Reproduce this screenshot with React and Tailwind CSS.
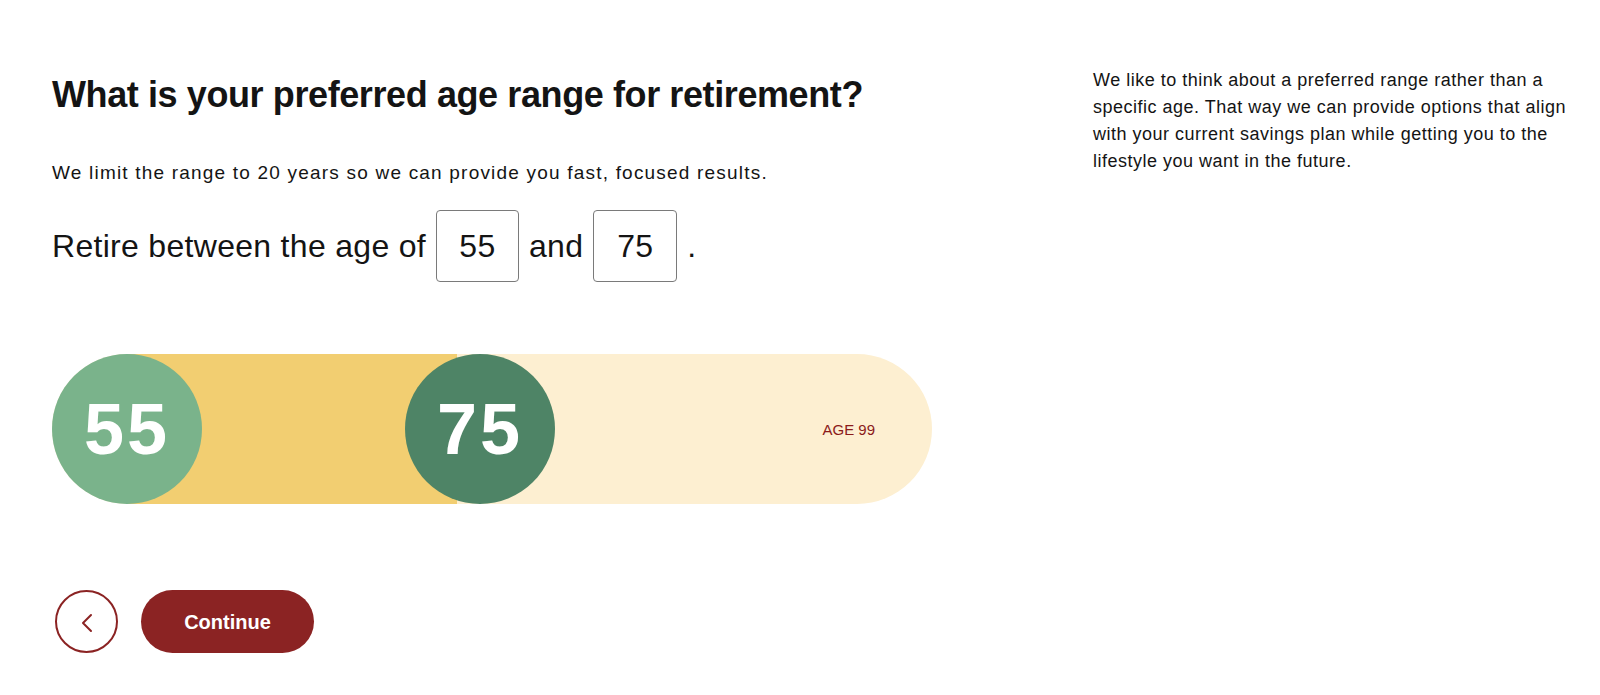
import React from "react";

export default function App() {
  const font = { fontFamily: '"Liberation Sans", Arial, Helvetica, sans-serif' };
  return (
    <div className="w-[1600px] h-[695px] bg-white text-[#141414] overflow-hidden" style={font}>
      <div className="flex pl-[52px] gap-[161px]">
        {/* Main column */}
        <div className="w-[880px] pt-[73px] flex flex-col">
          <h1 className="text-[36px] leading-[43px] font-bold tracking-[-0.4px] text-[#141414]">
            What is your preferred age range for retirement?
          </h1>
          <p className="mt-[43px] text-[19px] leading-[28px] tracking-[1.2px]">
            We limit the range to 20 years so we can provide you fast, focused results.
          </p>
          <div className="mt-[23px] flex items-center gap-[10px] text-[32px] leading-none tracking-[0.3px]">
            <span>Retire between the age of</span>
            <div className="w-[83px] h-[72px] border border-[#7a7a7a] rounded-[4px] flex items-center justify-center">
              55
            </div>
            <span>and</span>
            <div className="w-[84px] h-[72px] border border-[#7a7a7a] rounded-[4px] flex items-center justify-center">
              75
            </div>
            <span>.</span>
          </div>

          {/* Slider */}
          <div className="mt-[72px] relative w-[880px] h-[150px] rounded-full bg-[#fdefd1] flex items-center justify-end pr-[57px]">
            <div className="absolute left-[75px] top-0 h-[150px] w-[330px] bg-[#f2ce71]" />
            <div className="absolute left-0 top-0 w-[150px] h-[150px] rounded-full bg-[#7ab38b] flex items-center justify-center">
              <span className="text-white font-bold text-[72px] leading-none tracking-[3px]">55</span>
            </div>
            <div className="absolute left-[353px] top-0 w-[150px] h-[150px] rounded-full bg-[#4e8466] flex items-center justify-center">
              <span className="text-white font-bold text-[72px] leading-none tracking-[3px]">75</span>
            </div>
            <span className="relative text-[15px] leading-none text-[#8b1a1a]">AGE 99</span>
          </div>

          {/* Buttons */}
          <div className="mt-[86px] flex items-center gap-[23px] ml-[3px]">
            <button className="w-[63px] h-[63px] rounded-full border-2 border-[#8b2323] flex items-center justify-center bg-white">
              <svg width="14" height="20" viewBox="0 0 14 20" fill="none" className="mt-[2px]">
                <path d="M11 2 L3 10 L11 18" stroke="#8b2323" strokeWidth="2" strokeLinecap="round" strokeLinejoin="round" />
              </svg>
            </button>
            <button className="w-[173px] h-[63px] rounded-full bg-[#8b2323] text-white font-bold text-[20px] flex items-center justify-center">
              Continue
            </button>
          </div>
        </div>

        {/* Right column */}
        <div className="w-[476px] pt-[67px] text-[18px] leading-[27px] tracking-[0.5px] text-[#141414]">
          We like to think about a preferred range rather than a specific age. That way we can provide options that align with your current savings plan while getting you to the lifestyle you want in the future.
        </div>
      </div>
    </div>
  );
}
